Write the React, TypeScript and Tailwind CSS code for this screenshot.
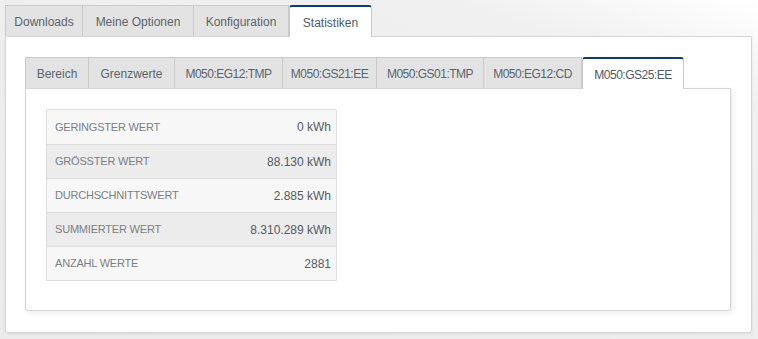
import React from "react";

const outerTabs = [
  { label: "Downloads", w: "w-[78px]" },
  { label: "Meine Optionen", w: "w-[111px]" },
  { label: "Konfiguration", w: "w-[95px]" },
  { label: "Statistiken", w: "w-[83px]", active: true },
];

const innerTabs = [
  { label: "Bereich", w: "w-[64px]" },
  { label: "Grenzwerte", w: "w-[86px]" },
  { label: "M050:EG12:TMP", w: "w-[108px]", narrow: true },
  { label: "M050:GS21:EE", w: "w-[94px]", narrow: true },
  { label: "M050:GS01:TMP", w: "w-[107px]", narrow: true },
  { label: "M050:EG12:CD", w: "w-[98px]", narrow: true },
  { label: "M050:GS25:EE", w: "w-[102px]", narrow: true, active: true },
];

const stats = [
  { label: "Geringster Wert", value: "0 kWh" },
  { label: "Grösster Wert", value: "88.130 kWh" },
  { label: "Durchschnittswert", value: "2.885 kWh" },
  { label: "Summierter Wert", value: "8.310.289 kWh" },
  { label: "Anzahl Werte", value: "2881" },
];

type Tab = { label: string; w: string; active?: boolean; narrow?: boolean };

const TabBar = ({ tabs }: { tabs: Tab[] }) => (
  <div className="flex items-end">
    {tabs.map((t, i) =>
      t.active ? (
        <div
          key={t.label}
          className={`${t.w} ${t.narrow ? "tracking-[-0.5px]" : ""} relative z-10 -mb-px flex h-[32px] items-center justify-center rounded-t-[3px] border-x border-t-2 border-x-[#cacaca] border-t-[#0d3c6e] bg-white pt-px text-[#4d5a68]`}
        >
          {t.label}
        </div>
      ) : (
        <div
          key={t.label}
          className={`${t.w} ${t.narrow ? "tracking-[-0.5px]" : ""} flex h-[31px] items-center justify-center border-t border-r border-[#cacaca] bg-[#e3e3e3] pt-px text-[#5b636b] ${i === 0 ? "border-l" : ""}`}
        >
          {t.label}
        </div>
      )
    )}
  </div>
);

export default function App() {
  return (
    <div className="h-[339px] w-[758px] overflow-hidden bg-[linear-gradient(200deg,#ffffff_0%,#f0f0f0_18%,#ebebeb_100%)] px-[5px] pt-[5px] font-['Liberation_Sans',Arial,sans-serif] text-[12px]">
      <TabBar tabs={outerTabs} />
      <div className="h-[297px] w-[747px] rounded-b-[3px] border border-[#d6d6d6] bg-white pl-[19px] pt-[20px] shadow-[0_1px_3px_rgba(0,0,0,0.08)]">
        <TabBar tabs={innerTabs} />
        <div className="h-[223px] w-[706px] rounded-b-[3px] border border-[#d4d4d4] bg-white pl-[20px] pt-[20px] shadow-[2px_2px_6px_rgba(0,0,0,0.08)]">
          <div className="w-[291px] rounded-t-[2px] border border-[#dcdcdc]">
            {stats.map((s, i) => (
              <div
                key={s.label}
                className={`flex h-[34px] items-center justify-between pl-[8px] pr-[5px] ${i > 0 ? "border-t border-[#dcdcdc]" : ""} ${i % 2 === 1 ? "bg-[#ececec]" : "bg-[#f7f7f7]"}`}
              >
                <span className="text-[11px] uppercase tracking-[-0.2px] text-[#7a7f85]">{s.label}</span>
                <span className="text-[12px] text-[#555b61]">{s.value}</span>
              </div>
            ))}
          </div>
        </div>
      </div>
    </div>
  );
}
